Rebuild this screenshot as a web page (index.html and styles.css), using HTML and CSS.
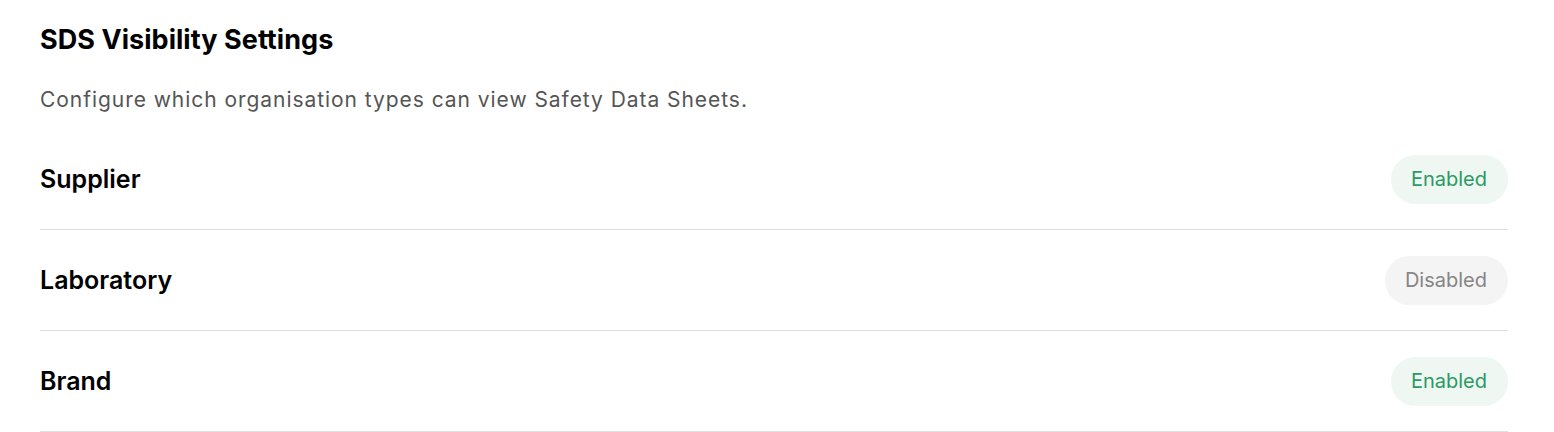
FILE: index.html
```html
<!DOCTYPE html>
<html lang="en">
<head>
<meta charset="utf-8">
<title>SDS Visibility Settings</title>
<link rel="stylesheet" href="styles.css">
</head>
<body>
<main class="panel">
  <h1 class="title">SDS Visibility Settings</h1>
  <p class="subtitle">Configure which organisation types can view Safety Data Sheets.</p>
  <ul class="list">
    <li class="row"><span class="label">Supplier</span><span class="badge badge-on">Enabled</span></li>
    <li class="row"><span class="label">Laboratory</span><span class="badge badge-off">Disabled</span></li>
    <li class="row"><span class="label">Brand</span><span class="badge badge-on">Enabled</span></li>
  </ul>
</main>
</body>
</html>
```
FILE: styles.css
```css
* { box-sizing: border-box; }
html, body { margin: 0; padding: 0; background: #ffffff; }
body { font-family: Inter, "Noto Sans", sans-serif; color: #000; }
.panel { padding: 24px 46px 0 40px; }
.title { margin: 0; font-size: 27px; line-height: 32px; font-weight: 700; letter-spacing: 0.05px; }
.subtitle { margin: 30px 0 0; font-size: 21px; line-height: 28px; color: #555555; letter-spacing: 0.95px; }
.list { list-style: none; margin: 15px 0 0; padding: 0; }
.row { display: flex; align-items: center; justify-content: space-between; height: 101px; border-bottom: 1px solid #e0dfe6; }
.label { font-size: 25px; font-weight: 600; }
.badge { display: inline-flex; align-items: center; justify-content: center; height: 49px; padding: 0 21px 0 20px; border-radius: 25px; font-size: 20px; }
.badge-on { background: #eef7f2; color: #2b9a64; }
.badge-off { background: #f4f4f4; color: #858585; }
```
